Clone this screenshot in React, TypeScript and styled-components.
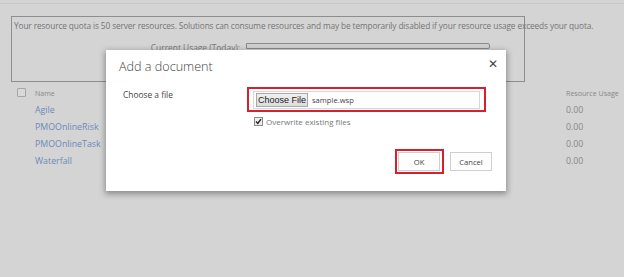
import React from "react";
import styled, { createGlobalStyle } from "styled-components";

const Global = createGlobalStyle`
  html, body { margin: 0; padding: 0; }
  body {
    width: 624px; height: 277px; overflow: hidden;
    background: #d4d4d4;
    font-family: "Open Sans", "Noto Sans", sans-serif;
  }
`;

const Page = styled.div`
  position: relative;
  width: 624px;
  height: 277px;
  padding-top: 3px;
  box-sizing: border-box;
`;

const TopRule = styled.div`
  height: 1px;
  background: #c9c9c9;
  margin-bottom: 12px;
`;

const QuotaBox = styled.div`
  margin-left: 11px;
  width: 510px;
  height: 61px;
  border: 1px solid #8e8e8e;
  display: flex;
  flex-direction: column;
  padding: 3px 0 0 2px;
  box-sizing: content-box;
`;

const QuotaText = styled.div`
  font-size: 8.3px;
  color: #747474;
  line-height: 12px;
  white-space: nowrap;
  letter-spacing: -0.12px;
`;

const UsageList = styled.div`
  margin-top: 10px;
  display: flex;
  flex-direction: column;
  gap: 6px;
`;

const UsageRow = styled.div`
  display: flex;
  align-items: center;
  height: 8px;
`;

const UsageLabel = styled.div`
  width: 226px;
  text-align: right;
  font-size: 8.4px;
  color: #777;
  padding-right: 6px;
  white-space: nowrap;
  line-height: 8px;
  margin-top: 3px;
`;

const Bar = styled.div`
  width: 242px;
  height: 4px;
  border: 1px solid #8a8a8a;
  border-radius: 0 2px 2px 0;
  background: #d0d0d0;
`;

const Table = styled.div`
  margin-top: 2px;
  display: flex;
  flex-direction: column;
`;

const Row = styled.div<{ $head?: boolean }>`
  display: grid;
  grid-template-columns: 35px 531px 1fr;
  align-items: center;
  height: 17px;
  font-size: ${(p) => (p.$head ? "7.1px" : "8.8px")};
  color: #888;
  white-space: nowrap;
`;

const HeadCheck = styled.span`
  width: 7px;
  height: 7px;
  border: 1px solid #a6a6a6;
  border-radius: 1px;
  margin-left: 17px;
  background: #d8d8d8;
`;

const NameLink = styled.span`
  color: #6a8bba;
`;

const Dialog = styled.div`
  position: absolute;
  left: 106px;
  top: 50px;
  width: 400px;
  height: 141px;
  background: #fff;
  box-shadow: 0 2px 6px 1px rgba(0, 0, 0, 0.35);
  box-sizing: border-box;
  padding: 6px 13px 0 13px;
  display: flex;
  flex-direction: column;
`;

const TitleBar = styled.div`
  display: flex;
  justify-content: space-between;
  align-items: center;
  height: 20px;
`;

const Title = styled.div`
  font-size: 12.6px;
  font-weight: 300;
  color: #444;
  margin-top: 1px;
`;

const Close = styled.div`
  font-size: 12px;
  color: #444;
  margin-right: -5px;
  margin-top: -6px;
`;

const FormRow = styled.div`
  display: flex;
  margin-top: 11px;
`;

const FieldLabel = styled.div`
  width: 128px;
  box-sizing: border-box;
  font-size: 8.4px;
  color: #444;
  padding: 2px 0 0 4px;
`;

const Field = styled.div`
  display: flex;
  flex-direction: column;
`;

const Highlight = styled.div`
  width: 231px;
  height: 21px;
  border: 2px solid #d6202e;
  display: flex;
  align-items: center;
  padding-left: 4px;
  box-sizing: content-box;
`;

const FileInput = styled.div`
  width: 227px;
  height: 18px;
  border: 1px solid #d8d8d8;
  display: flex;
  align-items: center;
  gap: 4px;
  padding-left: 2px;
  box-sizing: border-box;
`;

const FileButton = styled.div`
  height: 14px;
  width: 52px;
  border: 1px solid #a8a8a8;
  background: linear-gradient(#f0f0f0, #dcdcdc);
  font-family: "Liberation Sans", Arial, sans-serif;
  font-size: 9px;
  color: #222;
  display: flex;
  align-items: center;
  justify-content: center;
  box-sizing: border-box;
`;

const FileName = styled.span`
  font-size: 7.6px;
  color: #444;
`;

const CheckRow = styled.div`
  display: flex;
  align-items: center;
  gap: 3px;
  margin: 4px 0 0 7px;
  font-size: 8px;
  color: #777;
`;

const CheckBox = styled.span`
  width: 7px;
  height: 7px;
  border: 1px solid #8a8a8a;
  background: #eee;
  display: flex;
  align-items: center;
  justify-content: center;
`;

const Actions = styled.div`
  display: flex;
  justify-content: flex-end;
  align-items: center;
  gap: 6px;
  margin-top: 22px;
  margin-right: 1px;
`;

const RedFrame = styled.div`
  border: 2px solid #d6202e;
  padding: 1px 2px 1px 1px;
  display: flex;
`;

const Button = styled.div`
  width: 42px;
  height: 19px;
  border: 1px solid #cfcfcf;
  background: #fdfdfd;
  font-size: 7.6px;
  color: #444;
  display: flex;
  align-items: center;
  justify-content: center;
  box-sizing: border-box;
`;

const rows = ["Agile", "PMOOnlineRisk", "PMOOnlineTask", "Waterfall"];

export default function App() {
  return (
    <>
      <Global />
      <Page>
        <TopRule />
        <QuotaBox>
          <QuotaText>
            Your resource quota is 50 server resources. Solutions can consume resources and may be temporarily disabled if your resource usage exceeds your quota.
          </QuotaText>
          <UsageList>
            <UsageRow>
              <UsageLabel>Current Usage (Today):</UsageLabel>
              <Bar />
            </UsageRow>
            <UsageRow>
              <UsageLabel />
              <Bar />
            </UsageRow>
          </UsageList>
        </QuotaBox>
        <Table>
          <Row $head>
            <HeadCheck />
            <span>Name</span>
            <span>Resource Usage</span>
          </Row>
          {rows.map((r) => (
            <Row key={r}>
              <span />
              <NameLink>{r}</NameLink>
              <span>0.00</span>
            </Row>
          ))}
        </Table>

        <Dialog>
          <TitleBar>
            <Title>Add a document</Title>
            <Close>✕</Close>
          </TitleBar>
          <FormRow>
            <FieldLabel>Choose a file</FieldLabel>
            <Field>
              <Highlight>
                <FileInput>
                  <FileButton>Choose File</FileButton>
                  <FileName>sample.wsp</FileName>
                </FileInput>
              </Highlight>
              <CheckRow>
                <CheckBox>
                  <svg width="7" height="7" viewBox="0 0 7 7">
                    <path d="M1 3.6 L2.8 5.4 L6 1.2" stroke="#222" strokeWidth="1.4" fill="none" />
                  </svg>
                </CheckBox>
                Overwrite existing files
              </CheckRow>
            </Field>
          </FormRow>
          <Actions>
            <RedFrame>
              <Button>OK</Button>
            </RedFrame>
            <Button>Cancel</Button>
          </Actions>
        </Dialog>
      </Page>
    </>
  );
}
